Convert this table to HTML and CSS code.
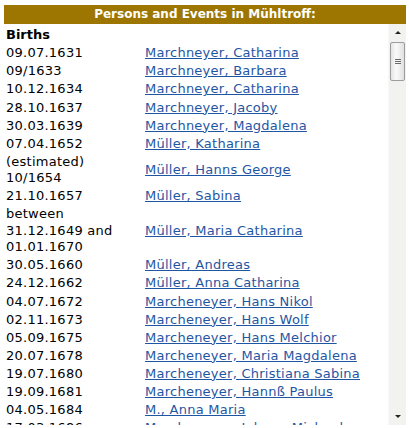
FILE: index.html
```html
<!DOCTYPE html>
<html>
<head>
<meta charset="utf-8">
<link rel="stylesheet" href="styles.css">
</head>
<body>
<div class="panel">
  <div class="title">Persons and Events in Mühltroff:</div>
  <div class="frame">
    <div class="list">
      <table class="events">
        <tr><th colspan="2">Births</th></tr>
        <tr><td class="date">09.07.1631</td><td><a href="#">Marchneyer, Catharina</a></td></tr>
        <tr><td class="date">09/1633</td><td><a href="#">Marchneyer, Barbara</a></td></tr>
        <tr><td class="date">10.12.1634</td><td><a href="#">Marchneyer, Catharina</a></td></tr>
        <tr><td class="date">28.10.1637</td><td><a href="#">Marchneyer, Jacoby</a></td></tr>
        <tr><td class="date">30.03.1639</td><td><a href="#">Marchneyer, Magdalena</a></td></tr>
        <tr><td class="date">07.04.1652</td><td><a href="#">Müller, Katharina</a></td></tr>
        <tr><td class="date">(estimated)<br>10/1654</td><td><a href="#">Müller, Hanns George</a></td></tr>
        <tr><td class="date">21.10.1657</td><td><a href="#">Müller, Sabina</a></td></tr>
        <tr><td class="date">between<br>31.12.1649 and<br>01.01.1670</td><td><a href="#">Müller, Maria Catharina</a></td></tr>
        <tr><td class="date">30.05.1660</td><td><a href="#">Müller, Andreas</a></td></tr>
        <tr><td class="date">24.12.1662</td><td><a href="#">Müller, Anna Catharina</a></td></tr>
        <tr><td class="date">04.07.1672</td><td><a href="#">Marcheneyer, Hans Nikol</a></td></tr>
        <tr><td class="date">02.11.1673</td><td><a href="#">Marcheneyer, Hans Wolf</a></td></tr>
        <tr><td class="date">05.09.1675</td><td><a href="#">Marcheneyer, Hans Melchior</a></td></tr>
        <tr><td class="date">20.07.1678</td><td><a href="#">Marcheneyer, Maria Magdalena</a></td></tr>
        <tr><td class="date">19.07.1680</td><td><a href="#">Marcheneyer, Christiana Sabina</a></td></tr>
        <tr><td class="date">19.09.1681</td><td><a href="#">Marcheneyer, Hannß Paulus</a></td></tr>
        <tr><td class="date">04.05.1684</td><td><a href="#">M., Anna Maria</a></td></tr>
        <tr><td class="date">17.03.1686</td><td><a href="#">Marcheneyer, Johann Michael</a></td></tr>
        <tr><td class="date">22.11.1688</td><td><a href="#">Marcheneyer, Eva Maria</a></td></tr>
      </table>
    </div>
    <div class="scrollbar">
      <div class="sb-btn"><span class="arrow-up"></span></div>
      <div class="sb-track">
        <div class="sb-thumb"><span class="grip"></span><span class="grip"></span><span class="grip"></span></div>
      </div>
      <div class="sb-btn"><span class="arrow-down"></span></div>
    </div>
  </div>
</div>
</body>
</html>
```

FILE: styles.css
```css
html, body {
  margin: 0;
  padding: 0;
  background: #ffffff;
  height: 428px;
  overflow: hidden;
}

body {
  font-family: "DejaVu Sans", Verdana, sans-serif;
  font-size: 13px;
  color: #000;
}

.panel {
  margin: 5px 3px 0 4px;
  display: flex;
  flex-direction: column;
}

.title {
  background: #9c7600;
  color: #ffffff;
  font-weight: bold;
  font-size: 12px;
  text-align: center;
  height: 19px;
  line-height: 19px;
}

.frame {
  display: flex;
  height: 401px;
}

.list {
  flex: 1;
  overflow: hidden;
}

.events {
  border-collapse: collapse;
  border-spacing: 0;
  letter-spacing: 0.25px;
}

.events th {
  text-align: left;
  font-weight: bold;
  letter-spacing: 0;
  padding: 3px 2px 1px 2px;
  line-height: 16.4px;
}

.events td {
  padding: 0.85px 2px;
  line-height: 16.4px;
  vertical-align: middle;
}

.events td.date {
  width: 135px;
}

.events a {
  color: #1f56a3;
  text-decoration: underline;
}

.scrollbar {
  width: 17px;
  background: #f2f2f0;
  border-left: 1px solid #f8f8f8;
  display: flex;
  flex-direction: column;
}

.sb-btn {
  height: 17px;
  display: flex;
  align-items: center;
  justify-content: center;
}

.arrow-up {
  width: 0;
  height: 0;
  border-left: 3px solid transparent;
  border-right: 3px solid transparent;
  border-bottom: 3px solid #222;
}

.arrow-down {
  width: 0;
  height: 0;
  border-left: 3px solid transparent;
  border-right: 3px solid transparent;
  border-top: 3px solid #222;
}

.sb-track {
  flex: 1;
  padding: 1px 1px 0 1px;
}

.sb-thumb {
  height: 37px;
  border: 1px solid #9c9c9c;
  border-radius: 2px;
  background: linear-gradient(to right, #e4e4e4, #fafafa 40%, #e0e0e0);
  display: flex;
  flex-direction: column;
  align-items: center;
  justify-content: center;
  gap: 1px;
}

.grip {
  display: block;
  width: 6px;
  height: 1px;
  background: #6a6a6a;
}
```
